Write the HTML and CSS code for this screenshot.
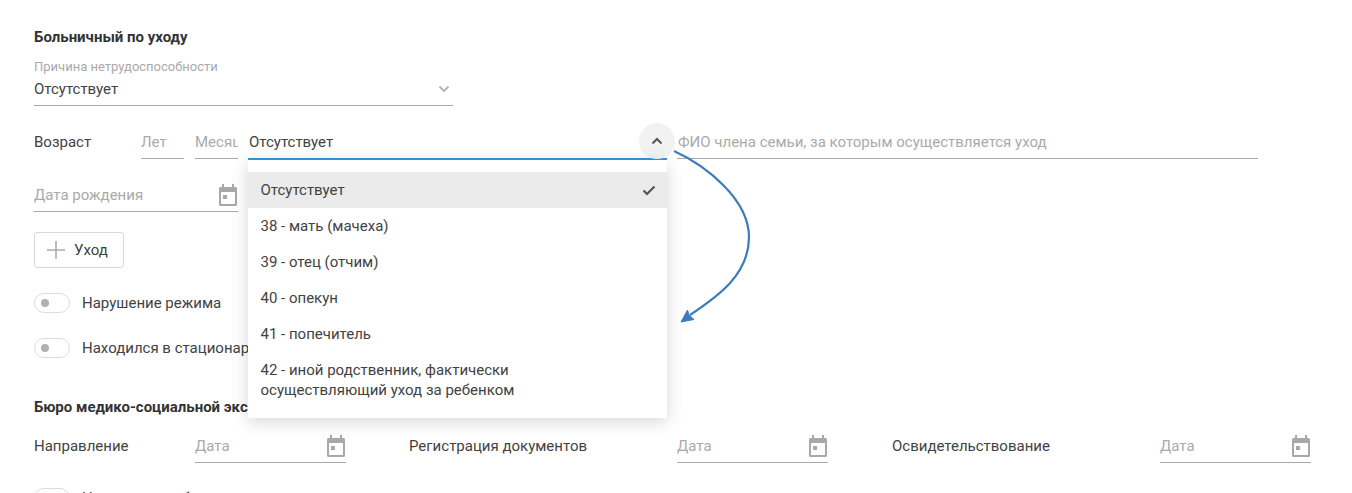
FILE: index.html
```html
<!DOCTYPE html>
<html lang="ru">
<head>
<meta charset="utf-8">
<title>Больничный по уходу</title>
<link rel="stylesheet" href="styles.css">
</head>
<body>
<svg class="sprite" width="0" height="0" aria-hidden="true"><defs>
<symbol id="cal" viewBox="0 0 18 22"><path d="M3 0h2v3h8V0h2v3h1.500A1.500 1.500 0 0 1 18 4.500V20.500A1.500 1.500 0 0 1 16.500 22h-15A1.500 1.500 0 0 1 0 20.500V4.500A1.500 1.500 0 0 1 1.500 3H3z M2 8v12h14V8z M4 11h4v4H4z" fill="#a8a8a8" fill-rule="evenodd"/></symbol>
</defs></svg>
<main class="page">
  <h2 class="title">Больничный по уходу</h2>
  <div class="select-field">
    <div class="caption">Причина нетрудоспособности</div>
    <div class="select-value">Отсутствует
      <svg class="chev" width="12" height="8" viewBox="0 0 12 8"><path d="M1.500 1.500 6 6l4.500-4.500" fill="none" stroke="#b5b5b5" stroke-width="2"/></svg>
    </div>
  </div>

  <div class="row age-row">
    <div class="label age-label">Возраст</div>
    <div class="input w-43"><span class="ph">Лет</span></div>
    <div class="input w-43 months"><span class="ph">Месяц</span></div>
    <div class="open-select">
      <span>Отсутствует</span>
      <span class="round-btn"><svg width="12" height="8" viewBox="0 0 12 8"><path d="M1.500 6.500 6 2l4.500 4.500" fill="none" stroke="#555" stroke-width="2"/></svg></span>
    </div>
    <div class="input w-581"><span class="ph">ФИО члена семьи, за которым осуществляется уход</span></div>
  </div>

  <div class="input date birth"><span class="ph">Дата рождения</span><svg class="cal"><use href="#cal"/></svg></div>

  <button class="add-btn" type="button">
    <svg width="20" height="20" viewBox="0 0 20 20"><path d="M10 1v18M1 10h18" stroke="#aaa" stroke-width="1.600" fill="none"/></svg>
    <span>Уход</span>
  </button>

  <div class="toggle-row first"><span class="toggle"></span><span class="label">Нарушение режима</span></div>
  <div class="toggle-row second"><span class="toggle"></span><span class="label">Находился в стационаре</span></div>

  <h2 class="title bureau">Бюро медико-социальной экспертизы</h2>
  <div class="row date-row">
    <div class="label l-161">Направление</div>
    <div class="input date w-151"><span class="ph">Дата</span><svg class="cal"><use href="#cal"/></svg></div>
    <div class="label l-268 ml-63">Регистрация документов</div>
    <div class="input date w-151"><span class="ph">Дата</span><svg class="cal"><use href="#cal"/></svg></div>
    <div class="label l-268 ml-64">Освидетельствование</div>
    <div class="input date w-151"><span class="ph">Дата</span><svg class="cal"><use href="#cal"/></svg></div>
  </div>
  <div class="toggle-row last"><span class="toggle"></span><span class="label">Нетрудоспособен</span></div>
</main>

<ul class="menu">
  <li class="item selected">Отсутствует
    <svg width="14" height="11" viewBox="0 0 14 11"><path d="M1.500 5.500 5 9l7.500-7.500" fill="none" stroke="#555" stroke-width="2.200"/></svg>
  </li>
  <li class="item">38 - мать (мачеха)</li>
  <li class="item">39 - отец (отчим)</li>
  <li class="item">40 - опекун</li>
  <li class="item">41 - попечитель</li>
  <li class="item multi">42 - иной родственник, фактически осуществляющий уход за ребенком</li>
</ul>

<svg class="arrow" width="90" height="190" viewBox="0 0 90 190">
  <path d="M2 1C35 16 77 50 77 87C77 125 45 147 18 165" fill="none" stroke="#3a7cbd" stroke-width="2.200"/>
  <path d="M9 172L15.500 160L17 165L22 169.500Z" fill="#3a7cbd" stroke="#3a7cbd" stroke-width="1"/>
</svg>
</body>
</html>
```
FILE: styles.css
```css
* { box-sizing: border-box; }
html, body { margin: 0; height: 493px; overflow: hidden; background: #fff; }
body { position: relative; font-family: Roboto, "Noto Sans", sans-serif; font-size: 15px; color: #424242; }
.sprite { position: absolute; }
.page { padding: 29px 0 0 34px; }
.title { margin: 0; font-size: 15px; font-weight: 700; line-height: 16px; color: #333; }
.select-field { width: 419px; height: 47px; margin-top: 14px; border-bottom: 1px solid #aaa; }
.caption { font-size: 13px; line-height: 14px; color: #aaa; padding-top: 1px; }
.select-value { display: flex; justify-content: space-between; align-items: center; height: 22px; margin-top: 4px; padding-right: 3px; }
.row { display: flex; align-items: flex-start; }
.age-row { margin-top: 17px; height: 37px; }
.label { line-height: 20px; color: #424242; }
.age-label { width: 107px; padding-top: 9px; }
.input { display: flex; align-items: center; justify-content: space-between; height: 36px; border-bottom: 1px solid #aaa; overflow: hidden; padding-top: 2px; white-space: nowrap; }
.ph { color: #aaa; }
.w-43 { width: 43px; }
.months { margin-left: 11px; }
.w-581 { width: 581px; margin-left: 10px; padding-left: 1px; }
.w-151 { width: 151px; }
.open-select { position: relative; display: flex; align-items: center; width: 419px; height: 37px; margin-left: 10px; padding-top: 2px; padding-left: 1px; border-bottom: 2px solid #3498db; }
.round-btn { position: absolute; right: -8px; top: 0; display: flex; align-items: center; justify-content: center; width: 36px; height: 36px; border-radius: 50%; background: #f2f2f2; }
.date { position: relative; }
.birth { width: 204px; margin-top: 16px; }
.cal { width: 18px; height: 22px; flex: none; margin-right: 1px; }
.add-btn { display: flex; align-items: center; gap: 8px; width: 90px; height: 36px; margin-top: 20px; padding: 0 0 0 11px; background: #fff; border: 1px solid #d8d8d8; border-radius: 3px; font: inherit; color: #424242; }
.toggle-row { display: flex; align-items: center; gap: 12px; height: 20px; }
.first { margin-top: 25px; }
.second { margin-top: 25px; }
.toggle { position: relative; width: 36px; height: 20px; border: 1px solid #ddd; border-radius: 10px; background: #fff; flex: none; }
.toggle::before { content: ""; position: absolute; left: 6px; top: 5px; width: 8px; height: 8px; border-radius: 50%; background: #b0b0b0; }
.bureau { margin-top: 41px; }
.date-row { margin-top: 12px; height: 36px; }
.l-161 { width: 161px; padding-top: 9px; }
.l-268 { width: 268px; padding-top: 9px; }
.ml-63 { margin-left: 63px; }
.ml-64 { margin-left: 64px; }
.last { margin-top: 25px; }
.menu { position: absolute; left: 248px; top: 160px; width: 419px; height: 258px; margin: 0; padding: 12px 0 0; list-style: none; background: #fff; box-shadow: 0 4px 16px rgba(0,0,0,.16); }
.item { display: flex; align-items: center; justify-content: space-between; height: 36px; padding: 0 11px 0 12.500px; line-height: 20px; }
.selected { background: #ebebeb; }
.multi { height: auto; padding-top: 8px; padding-right: 100px; }
.arrow { position: absolute; left: 672px; top: 150px; }
```
